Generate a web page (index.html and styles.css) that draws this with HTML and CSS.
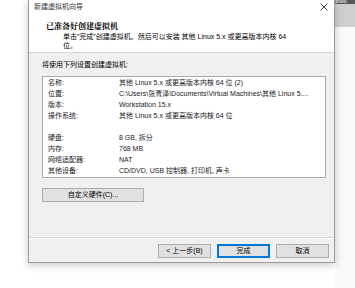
FILE: index.html
```html
<!DOCTYPE html>
<html lang="zh-CN">

<head>
  <meta charset="UTF-8" />
  <title>新建虚拟机向导</title>
  <link rel="stylesheet" href="styles.css">
</head>

<body>
  <div class="desk">
    <div class="gutter"></div>

    <div class="window">
      <div class="titlebar">
        <span class="title">新建虚拟机向导</span>
        <svg class="close" width="8" height="8" viewBox="0 0 8 8">
          <path d="M0.5 0.5 L7.5 7.5 M7.5 0.5 L0.5 7.5" stroke="#333" stroke-width="0.9" fill="none" />
        </svg>
      </div>

      <div class="header">
        <div class="h-title">已准备好创建虚拟机</div>
        <div class="h-sub">
          <div>单击“完成”创建虚拟机。然后可以安装 其他 Linux 5.x 或更高版本内核 64</div>
          <div>位。</div>
        </div>
      </div>

      <div class="content">
        <div class="lead">将使用下列设置创建虚拟机:</div>
        <div class="summary">
          <span>名称:</span><span>其他 Linux 5.x 或更高版本内核 64 位 (2)</span>
          <span>位置:</span><span>C:\Users\张青泽\Documents\Virtual Machines\其他 Linux 5....</span>
          <span>版本:</span><span>Workstation 15.x</span>
          <span>操作系统:</span><span>其他 Linux 5.x 或更高版本内核 64 位</span>
          <span class="gap"></span><span class="gap"></span>
          <span>硬盘:</span><span>8 GB, 拆分</span>
          <span>内存:</span><span>768 MB</span>
          <span>网络适配器:</span><span>NAT</span>
          <span>其他设备:</span><span>CD/DVD, USB 控制器, 打印机, 声卡</span>
        </div>
        <button class="btn custom">自定义硬件(C)...</button>
      </div>

      <div class="footer">
        <button class="btn">&lt; 上一步(B)</button>
        <button class="btn primary">完成</button>
        <button class="btn">取消</button>
      </div>
    </div>

    <div class="behind">
      <div class="behind-bar">虚拟机</div>
      <div class="behind-tab"></div>
    </div>
  </div>
</body>

</html>
```

FILE: styles.css
```css
body {
  margin: 0;
  background-color: #fff;
  font-family: "Liberation Sans", "Noto Sans CJK SC", sans-serif;
  font-size: 7px;
  color: #000;
}

.desk {
  display: flex;
  width: 355px;
  height: 288px;
  overflow: hidden;
}

.gutter {
  width: 28px;
  flex-shrink: 0;
}

.window {
  position: relative;
  z-index: 1;
  width: 305px;
  height: 262px;
  flex-shrink: 0;
  display: flex;
  flex-direction: column;
  background-color: #f0f0f0;
  border: 1px solid #9a9a9a;
  border-top: none;
  box-shadow: 0 2px 8px rgba(0, 0, 0, 0.22);
}

.titlebar {
  height: 14px;
  display: flex;
  align-items: center;
  justify-content: space-between;
  padding: 0 6px 2px 5px;
  background-color: #fff;
  line-height: 10px;
}

.title {
  font-size: 7px;
  color: #333;
}

.header {
  background-color: #fff;
  padding: 5px 0 1px 17px;
  border-bottom: 1px solid #d4d4d4;
  height: 30px;
}

.h-title {
  font-family: "Noto Serif CJK SC", "Noto Sans CJK SC", serif;
  font-weight: 700;
  font-size: 8px;
  line-height: 10px;
}

.h-sub {
  margin-top: 1px;
  padding-left: 17px;
  line-height: 9px;
  white-space: nowrap;
}

.content {
  flex: 1;
  padding: 6px 8px 0 13px;
  border-bottom: 1px solid #d4d4d4;
}

.lead {
  line-height: 11px;
}

.summary {
  margin-top: 6px;
  display: grid;
  grid-template-columns: 71px 1fr;
  padding: 0 0 1px 5px;
  background-color: #fff;
  border: 1px solid #a9a9a9;
  line-height: 11px;
  color: #1a1a1a;
  white-space: nowrap;
}

.gap {
  height: 11px;
}

.btn {
  height: 14px;
  width: 53px;
  padding: 0;
  font-family: inherit;
  font-size: 7px;
  line-height: 12px;
  color: #000;
  background-color: #e1e1e1;
  border: 1px solid #adadad;
}

.custom {
  display: block;
  width: 102px;
  margin-top: 10px;
}

.footer {
  display: flex;
  justify-content: flex-end;
  gap: 6px;
  padding: 5px 5px 4px 0;
  border-top: 1px solid #fff;
}

.primary {
  border-color: #0078d7;
  box-shadow: inset 0 0 0 1px #0078d7;
}

.behind {
  flex: 1;
  background-color: #fafafa;
}

.behind-bar {
  height: 4px;
  background-color: #5a5a5a;
  color: #fff;
  font-size: 4px;
  line-height: 4px;
  overflow: hidden;
}

.behind-tab {
  height: 23px;
  background-color: #cfcfcf;
}
```
